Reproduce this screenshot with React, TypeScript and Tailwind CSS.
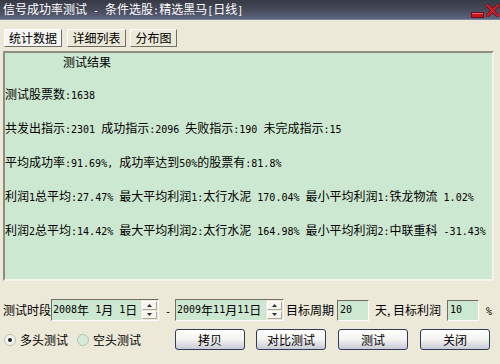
import React from 'react'

const font = "font-['SimSun','Noto_Sans_CJK_SC',sans-serif]"

// ASCII runs get a 6px-wide mono face, like the bitmap font of the original dialog
function T({ children }: { children: string }) {
  const parts = children.split(/([\x20-\x7e]+)/).filter((p) => p !== '')
  return (
    <>
      {parts.map((p, i) =>
        /^[\x20-\x7e]+$/.test(p) ? (
          <span key={i} className="font-['DejaVu_Sans_Mono',monospace] text-[10px]">
            {p}
          </span>
        ) : (
          <React.Fragment key={i}>{p}</React.Fragment>
        )
      )}
    </>
  )
}

const lines = [
  '测试股票数:1638',
  '共发出指示:2301 成功指示:2096 失败指示:190 未完成指示:15',
  '平均成功率:91.69%, 成功率达到50%的股票有:81.8%',
  '利润1总平均:27.47% 最大平均利润1:太行水泥 170.04% 最小平均利润1:铁龙物流 1.02%',
  '利润2总平均:14.42% 最大平均利润2:太行水泥 164.98% 最小平均利润2:中联重科 -31.43%',
]

function Spinner() {
  return (
    <div className="flex h-full w-[17px] shrink-0 flex-col gap-px bg-[#ece9d8] p-px">
      {['up', 'down'].map((d) => (
        <div
          key={d}
          className="flex flex-1 items-center justify-center border border-t-white border-l-white border-b-[#aca899] border-r-[#aca899] bg-[#f4f3ee]"
        >
          <svg width="5" height="3" viewBox="0 0 5 3">
            {d === 'up' ? <path d="M0 3 L2.5 0 L5 3 Z" fill="#333" /> : <path d="M0 0 L2.5 3 L5 0 Z" fill="#333" />}
          </svg>
        </div>
      ))}
    </div>
  )
}

function DateBox({ value, width }: { value: string; width: string }) {
  return (
    <div className={`flex h-[22px] ${width} shrink-0 border border-t-[#716f64] border-l-[#716f64] border-b-white border-r-white`}>
      <div className="flex min-w-0 flex-1 items-center whitespace-pre bg-[#cde8d0] pl-[1px] text-[12px] leading-none">
        <T>{value}</T>
      </div>
      <Spinner />
    </div>
  )
}

function Field({ value, width }: { value: string; width: string }) {
  return (
    <div
      className={`flex h-[21px] ${width} shrink-0 items-start border border-t-[#716f64] border-l-[#716f64] border-b-white border-r-white bg-[#cde8d0] pl-[2px] pt-[3px] text-[12px] leading-[12px]`}
    >
      <T>{value}</T>
    </div>
  )
}

function XpButton({ label, className = '' }: { label: string; className?: string }) {
  return (
    <button
      className={`flex h-[21px] w-[70px] shrink-0 items-center justify-center rounded-[3px] border border-[#2f3b57] bg-gradient-to-b from-white via-[#f3f3f1] to-[#c9cad6] text-[12px] leading-none text-black ${className}`}
    >
      {label}
    </button>
  )
}

function Radio({ checked }: { checked: boolean }) {
  return (
    <span
      className={`flex h-[12px] w-[12px] shrink-0 items-center justify-center rounded-full border border-[#b8c2b8] ${checked ? 'bg-[#f4f4f0]' : 'bg-[#d6ecd8]'}`}
    >
      {checked && <span className="h-[4px] w-[4px] rounded-full bg-[#1f1f1f]" />}
    </span>
  )
}

export default function App() {
  return (
    <div className={`flex h-[364px] w-[500px] flex-col overflow-hidden bg-[#ece9d8] text-black ${font}`}>
      {/* title bar */}
      <div className="relative flex h-[20px] shrink-0 items-center border-b border-[#7c86a0] bg-gradient-to-b from-[#363a45] via-[#454958] to-[#5d6680] pl-[3px]">
        <span className="whitespace-pre text-[12px] leading-none text-white">
          <T>信号成功率测试 - 条件选股:精选黑马[日线]</T>
        </span>
        <svg className="absolute left-[471px] top-[12px]" width="13" height="6" viewBox="0 0 13 6">
          <rect x="0.5" y="0.5" width="12" height="5" fill="#c8141e" stroke="#6e0d12" />
          <rect x="1" y="1" width="11" height="1" fill="#f0606a" />
        </svg>
        <svg className="absolute left-[486px] top-[4px]" width="13" height="13" viewBox="0 0 13 13">
          <path d="M1.5 1.5 L11.5 11.5 M11.5 1.5 L1.5 11.5" stroke="#6e0d12" strokeWidth="3.6" strokeLinecap="square" />
          <path d="M1.5 1.5 L11.5 11.5 M11.5 1.5 L1.5 11.5" stroke="#d51f2a" strokeWidth="2" strokeLinecap="square" />
        </svg>
      </div>

      {/* tabs */}
      <div className="ml-[4px] mt-[9px] flex h-[18px] shrink-0 items-stretch text-[12px] leading-none">
        <div className="flex w-[58px] items-center justify-center border border-t-white border-l-white border-b-[#716f64] border-r-[#716f64] bg-[#f7f6f2]">
          统计数据
        </div>
        <div className="ml-[5px] flex w-[59px] items-center justify-center border border-t-white border-l-white border-b-[#716f64] border-r-[#716f64] bg-[#ece9d8]">
          详细列表
        </div>
        <div className="ml-[4px] flex w-[47px] items-center justify-center border border-t-white border-l-white border-b-[#716f64] border-r-[#716f64] bg-[#ece9d8]">
          分布图
        </div>
      </div>

      {/* result panel */}
      <div className="ml-[3px] mt-[4px] flex h-[230px] w-[491px] shrink-0 flex-col gap-[18px] border-2 border-t-[#8e8d7f] border-l-[#8e8d7f] border-b-[#f4f3ee] border-r-[#f4f3ee] bg-[#cde8d0] pt-[2px] text-[12px] leading-[14px]">
        <div className="pl-[58px]">测试结果</div>
        {lines.map((l) => (
          <div key={l} className="whitespace-pre">
            <T>{l}</T>
          </div>
        ))}
      </div>

      {/* period row */}
      <div className="mt-[18px] flex h-[22px] shrink-0 items-center pl-[3px] text-[12px] leading-none">
        <span className="w-[48px] shrink-0">测试时段</span>
        <DateBox value="2008年 1月 1日" width="w-[108px]" />
        <span className="ml-[6px] w-[10px] shrink-0">
          <T>-</T>
        </span>
        <DateBox value="2009年11月11日" width="w-[109px]" />
        <span className="ml-[2px] w-[48px] shrink-0">目标周期</span>
        <span className="ml-[3px]">
          <Field value="20" width="w-[32px]" />
        </span>
        <span className="ml-[6px] w-[66px] shrink-0 whitespace-pre">天, 目标利润</span>
        <span className="ml-[6px]">
          <Field value="10" width="w-[32px]" />
        </span>
        <span className="ml-[7px]">
          <T>%</T>
        </span>
      </div>

      {/* action row */}
      <div className="mt-[8px] flex h-[21px] shrink-0 items-center pl-[4px] text-[12px] leading-none">
        <Radio checked />
        <span className="ml-[4px] w-[48px] shrink-0">多头测试</span>
        <span className="ml-[9px]">
          <Radio checked={false} />
        </span>
        <span className="ml-[4px] w-[48px] shrink-0">空头测试</span>
        <XpButton label="拷贝" className="ml-[34px]" />
        <XpButton label="对比测试" className="ml-[11px]" />
        <XpButton label="测试" className="ml-[12px]" />
        <XpButton label="关闭" className="ml-[12px]" />
      </div>
    </div>
  )
}
